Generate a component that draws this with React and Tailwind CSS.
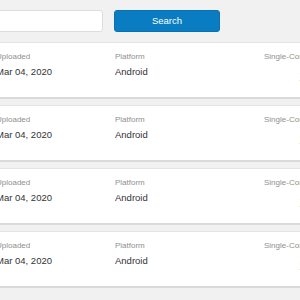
export default function App() {
  const rows = [1, 2, 3, 4]

  return (
    <div className="w-[300px] h-[300px] overflow-hidden bg-[#f1f1f1] font-['Liberation_Sans',Arial,sans-serif]">
      <div className="ml-[-20px] w-[420px] pt-[10px]">
        {/* search bar */}
        <div className="flex items-center gap-[11px]">
          <input
            className="w-[123px] h-[22px] bg-white border border-[#dddddd] rounded-[3px] outline-none"
            type="text"
          />
          <button className="w-[106px] h-[22px] bg-[#0a7dc2] text-white text-[9.5px] rounded-[3px] border border-[#0872b1]">
            Search
          </button>
        </div>

        {/* result cards */}
        <div className="mt-[10px] flex flex-col gap-[6px]">
          {rows.map((r) => (
            <div
              key={r}
              className="h-[57px] bg-white border border-[#e4e4e4] border-b-2 border-b-[#dadada] rounded-[2px] flex pt-[9px] pl-[15px]"
            >
              <div className="w-[119px]">
                <div className="text-[8px] leading-[10px] text-[#8f8f8f]">Uploaded</div>
                <div className="mt-[4px] text-[9.5px] leading-[12px] text-[#333333]">Mar 04, 2020</div>
              </div>
              <div className="w-[149px]">
                <div className="text-[8px] leading-[10px] text-[#8f8f8f]">Platform</div>
                <div className="mt-[4px] text-[9.5px] leading-[12px] text-[#333333]">Android</div>
              </div>
              <div className="w-[120px]">
                <div className="text-[8px] leading-[10px] text-[#8f8f8f]">Single-Core Score</div>
                <div className="mt-[8px] pl-[35px] text-[12px] leading-[14px] text-[#e8a15c]">1234</div>
              </div>
            </div>
          ))}
        </div>
      </div>
    </div>
  )
}
